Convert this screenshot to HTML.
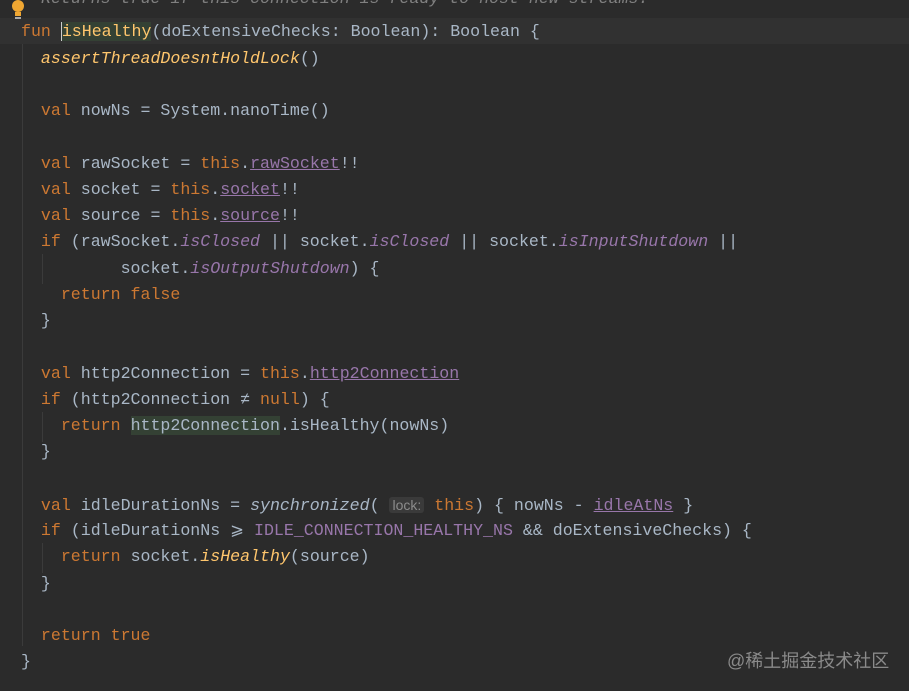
<!DOCTYPE html>
<html><head><meta charset="utf-8"><style>
html,body{margin:0;padding:0;}
body{width:909px;height:691px;background:#2b2b2b;overflow:hidden;position:relative;font-family:"Liberation Mono",monospace;font-size:16.6px;color:#a9b7c6;}
.l{position:absolute;left:21px;white-space:pre;height:26px;line-height:26px;margin-top:1px}
.k{color:#cc7832}.f{color:#ffc66d;font-style:italic}.p{color:#9876aa}.pu{color:#9876aa;text-decoration:underline}
.i{font-style:italic;color:#9876aa}.c{color:#808080;font-style:italic}
.g{position:absolute;width:1px;background:#3b3b3b}
.hint{background:#3a3a3a;color:#8c8c8c;font-family:"Liberation Sans",sans-serif;font-size:14px;border-radius:3px;padding:0 3px}
.cur{position:absolute;left:0;top:18px;width:909px;height:26px;background:#313131}
.wm{position:absolute;left:727px;top:647px;font-family:"Liberation Sans","Noto Sans CJK SC",sans-serif;font-size:18px;color:#8a8a8a}
</style></head><body>
<div class="cur"></div>
<div class="g" style="left:22px;top:44px;height:602px"></div>
<div class="g" style="left:42px;top:254px;height:30px"></div>
<div class="g" style="left:42px;top:543px;height:30px"></div>
<div class="g" style="left:42px;top:412px;height:30px"></div>
<svg style="position:absolute;left:10px;top:0" width="16" height="22"><circle cx="8" cy="6" r="6" fill="#f0a732"/><rect x="5" y="12" width="6" height="4" fill="#f0a732"/><rect x="5" y="17" width="6" height="2" fill="#aaa"/></svg>
<div class="l c" style="left:41px;top:-15px">Returns true if this connection is ready to host new streams.</div>
<div class="l" style="top:18px"><span class="k">fun </span><span style="background:#344134;color:#ffc66d;border-left:1px solid #ccc">isHealthy</span>(doExtensiveChecks: Boolean): Boolean {</div>
<div class="l" style="top:45px">  <span class="f">assertThreadDoesntHoldLock</span>()</div>
<div class="l" style="top:97px">  <span class="k">val </span>nowNs = System.nanoTime()</div>
<div class="l" style="top:150px">  <span class="k">val </span>rawSocket = <span class="k">this</span>.<span class="pu">rawSocket</span>!!</div>
<div class="l" style="top:176px">  <span class="k">val </span>socket = <span class="k">this</span>.<span class="pu">socket</span>!!</div>
<div class="l" style="top:202px">  <span class="k">val </span>source = <span class="k">this</span>.<span class="pu">source</span>!!</div>
<div class="l" style="top:228px">  <span class="k">if </span>(rawSocket.<span class="i">isClosed</span> || socket.<span class="i">isClosed</span> || socket.<span class="i">isInputShutdown</span> ||</div>
<div class="l" style="top:255px">          socket.<span class="i">isOutputShutdown</span>) {</div>
<div class="l" style="top:281px">    <span class="k">return false</span></div>
<div class="l" style="top:307px">  }</div>
<div class="l" style="top:360px">  <span class="k">val </span>http2Connection = <span class="k">this</span>.<span class="pu">http2Connection</span></div>
<div class="l" style="top:386px">  <span class="k">if </span>(http2Connection ≠ <span class="k">null</span>) {</div>
<div class="l" style="top:412px">    <span class="k">return </span><span style="background:#344134">http2Connection</span>.isHealthy(nowNs)</div>
<div class="l" style="top:438px">  }</div>
<div class="l" style="top:491px">  <span class="k">val </span>idleDurationNs = <span style="font-style:italic">synchronized</span>( <span class="hint">lock:</span> <span class="k">this</span>) { nowNs - <span class="pu">idleAtNs</span> }</div>
<div class="l" style="top:517px">  <span class="k">if </span>(idleDurationNs ⩾ <span class="p">IDLE_CONNECTION_HEALTHY_NS</span> &amp;&amp; doExtensiveChecks) {</div>
<div class="l" style="top:543px">    <span class="k">return </span>socket.<span class="f">isHealthy</span>(source)</div>
<div class="l" style="top:570px">  }</div>
<div class="l" style="top:622px">  <span class="k">return true</span></div>
<div class="l" style="top:648px">}</div>
<div class="wm">@稀土掘金技术社区</div>
</body></html>
